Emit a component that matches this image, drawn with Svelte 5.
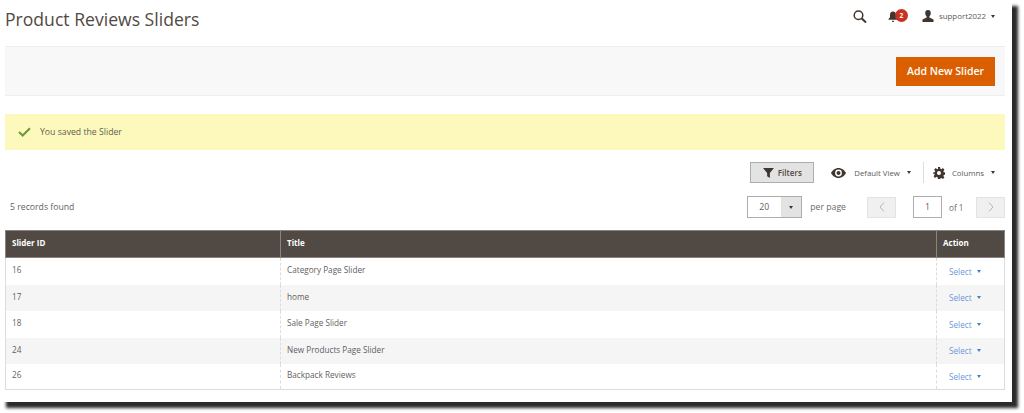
<script>
  const rows = [
    { id: 16, title: "Category Page Slider" },
    { id: 17, title: "home" },
    { id: 18, title: "Sale Page Slider" },
    { id: 24, title: "New Products Page Slider" },
    { id: 26, title: "Backpack Reviews" },
  ];
</script>

<div class="page">
  <header class="top">
    <h1>Product Reviews Sliders</h1>
    <div class="tools">
      <svg class="search" width="14" height="13" viewBox="0 0 14 13">
        <circle cx="5.5" cy="5.200" r="4.300" fill="none" stroke="#41362f" stroke-width="1.500" />
        <path d="M8.800 8.500 L13 12.500" stroke="#41362f" stroke-width="2" />
      </svg>
      <span class="bell">
        <svg width="10" height="11" viewBox="0 0 12 13">
          <path d="M6 0.500c2.400 0 3.600 1.800 3.600 4v3l1.900 2.200v.8H.5v-.8l1.900-2.200v-3C2.400 2.300 3.600.5 6 .5zM4.500 11.500h3a1.500 1.500 0 0 1-3 0z" fill="#41362f" />
        </svg>
        <b class="badge">2</b>
      </span>
      <span class="user">
        <svg width="12" height="12" viewBox="0 0 13 13">
          <path d="M6.500 0c2 0 3 1.400 3 3.300 0 1.500-.6 3-1.500 3.700v1.200l4.500 2.200V13H.5v-2.600L5 8.200V7C4.100 6.300 3.500 4.800 3.500 3.300 3.500 1.400 4.500 0 6.500 0z" fill="#41362f" />
        </svg>
        <span class="uname">support2022</span>
        <i class="caret dark"></i>
      </span>
    </div>
  </header>

  <div class="actions">
    <button class="primary">Add New Slider</button>
  </div>

  <div class="message">
    <svg width="13" height="10" viewBox="0 0 14 11">
      <path d="M1 5.500 L5 9.300 L13 1.300" fill="none" stroke="#6f9a3c" stroke-width="2.400" />
    </svg>
    <span>You saved the Slider</span>
  </div>

  <div class="controls">
    <button class="filters">
      <svg width="11" height="10" viewBox="0 0 12 11"><path d="M0 0h12L7.500 5.500V11L4.500 9V5.500z" fill="#41362f" /></svg>
      Filters
    </button>
    <span class="view">
      <svg width="15" height="10" viewBox="0 0 15 10">
        <path fill-rule="evenodd" d="M7.500 0C11 0 13.700 2.500 15 5c-1.300 2.500-4 5-7.500 5S1.300 7.500 0 5c1.300-2.500 4-5 7.500-5zm0 1.600a3.400 3.400 0 1 0 0 6.800 3.400 3.400 0 0 0 0-6.800z" fill="#41362f" />
        <circle cx="7.500" cy="5" r="2" fill="#41362f" />
      </svg>
      <span class="lbl">Default View</span>
      <i class="caret dark wide"></i>
    </span>
    <span class="columns">
      <svg width="12" height="12" viewBox="0 0 13 13">
        <path fill-rule="evenodd" d="M5.300 0h2.400l.3 1.900 1.100.5L10.700 1.200l1.700 1.700-1.200 1.600.5 1.100 1.900.3v2.400l-1.900.3-.5 1.100 1.200 1.600-1.700 1.700-1.600-1.200-1.100.5-.3 1.900H5.300L5 11.100l-1.100-.5-1.600 1.200-1.700-1.700 1.200-1.600-.5-1.100L0 7.100V5.900l1.900-.3.5-1.100L1.200 2.900l1.700-1.700 1.600 1.200 1.100-.5zM6.500 4.300a2.200 2.200 0 1 0 0 4.400 2.200 2.200 0 0 0 0-4.400z" fill="#41362f" />
      </svg>
      <span class="lbl narrow">Columns</span>
      <i class="caret dark wide"></i>
    </span>
  </div>

  <div class="pager-row">
    <span class="found">5 records found</span>
    <div class="pager">
      <span class="select"><span class="val">20</span><span class="sel-btn"><i class="caret dark"></i></span></span>
      <span class="pp">per page</span>
      <span class="nav prev">
        <svg width="6" height="10" viewBox="0 0 6 10"><path d="M5 .5 L1 5 L5 9.500" fill="none" stroke="#b5b5b5" /></svg>
      </span>
      <span class="cur">1</span>
      <span class="of">of 1</span>
      <span class="nav next">
        <svg width="6" height="10" viewBox="0 0 6 10"><path d="M1 .5 L5 5 L1 9.500" fill="none" stroke="#b5b5b5" /></svg>
      </span>
    </div>
  </div>

  <table>
    <thead>
      <tr><th class="c1">Slider ID</th><th>Title</th><th class="c3">Action</th></tr>
    </thead>
    <tbody>
      {#each rows as row, i}
        <tr class:alt={i % 2 === 1}>
          <td>{row.id}</td>
          <td>{row.title}</td>
          <td class="act"><span class="link">Select</span><i class="caret blue"></i></td>
        </tr>
      {/each}
    </tbody>
  </table>
</div>

<style>
  :global(body) {
    background: #fff;
    font-family: "Open Sans", sans-serif;
    min-height: 413px;
    overflow: hidden;
  }
  .page {
    width: 1012px;
    height: 402px;
    box-sizing: border-box;
    padding: 0 7px 0 5px;
    background: #fff;
    color: #5f5f5f;
    font-size: 8.700px;
    box-shadow: 6px 6px 3px #2b2b2b;
  }
  .top {
    height: 46px;
    display: flex;
    justify-content: space-between;
  }
  h1 {
    margin: 6px 0 0;
    font-size: 17.600px;
    font-weight: 400;
    line-height: 26px;
    color: #514943;
  }
  .tools {
    display: flex;
    align-items: flex-start;
    padding-top: 9px;
    padding-right: 10px;
  }
  .search {
    margin-right: 21px;
    margin-top: 1px;
  }
  .bell {
    position: relative;
    width: 34px;
    height: 14px;
    padding-top: 2px;
    box-sizing: border-box;
  }
  .badge {
    position: absolute;
    left: 7px;
    top: 0;
    width: 13px;
    height: 13px;
    border-radius: 50%;
    background: #c8321f;
    color: #fff;
    font-size: 6.500px;
    line-height: 13px;
    text-align: center;
  }
  .user {
    display: flex;
    align-items: center;
    height: 14px;
  }
  .uname {
    margin-left: 5px;
    color: #5a5a5a;
    font-size: 7.900px;
  }
  .caret {
    display: inline-block;
    width: 0;
    height: 0;
    border-style: solid;
    border-width: 3px 2.500px 0;
    border-color: transparent;
  }
  .caret.dark {
    border-top-color: #41362f;
    margin-left: 5px;
  }
  .caret.wide {
    margin-left: 7px;
  }
  .caret.blue {
    border-top-color: #3f7fd6;
    margin-left: 5px;
    vertical-align: 2px;
  }
  .actions {
    height: 50px;
    box-sizing: border-box;
    background: #f8f8f8;
    border-top: 1px solid #eee;
    border-bottom: 1px solid #eee;
    display: flex;
    justify-content: flex-end;
    align-items: center;
    padding-right: 10px;
  }
  .primary {
    width: 99px;
    height: 29px;
    border: 1px solid #d26000;
    background: #db5f00;
    color: #fff;
    font: 600 10.500px "Open Sans", sans-serif;
    padding: 0;
  }
  .message {
    margin-top: 18px;
    height: 36px;
    background: #fdf9bd;
    display: flex;
    align-items: center;
    padding-left: 13px;
    color: #5f5f4f;
    font-size: 8.700px;
  }
  .message span {
    margin-left: 9px;
  }
  .controls {
    margin-top: 12px;
    height: 21px;
    display: flex;
    justify-content: flex-end;
    align-items: center;
    padding-right: 10px;
  }
  .filters {
    width: 64px;
    height: 21px;
    box-sizing: border-box;
    background: #e3e3e3;
    border: 1px solid #adadad;
    color: #514943;
    font: 600 8.100px "Open Sans", sans-serif;
    display: flex;
    align-items: center;
    justify-content: center;
    gap: 4px;
    padding: 0;
  }
  .view {
    display: flex;
    align-items: center;
    margin-left: 17px;
    padding-right: 12px;
    height: 21px;
    border-right: 1px solid #ddd;
  }
  .columns {
    display: flex;
    align-items: center;
    margin-left: 9px;
  }
  .lbl {
    margin-left: 8px;
    color: #5a5a5a;
    font-size: 7.800px;
  }
  .lbl.narrow {
    margin-left: 7px;
  }
  .pager-row {
    margin-top: 12px;
    height: 24px;
    display: flex;
    justify-content: space-between;
    align-items: center;
  }
  .found {
    margin-left: 5px;
  }
  .pager {
    display: flex;
    align-items: center;
  }
  .select {
    display: flex;
    width: 55px;
    height: 22px;
    box-sizing: border-box;
    border: 1px solid #adadad;
  }
  .val {
    flex: 1;
    padding-left: 11px;
    line-height: 20px;
  }
  .sel-btn {
    width: 20px;
    background: #e3e3e3;
    display: flex;
    align-items: center;
    justify-content: center;
  }
  .sel-btn .caret {
    margin: 0;
  }
  .pp {
    margin-left: 8px;
    margin-right: 21px;
    color: #6a6a6a;
  }
  .nav {
    width: 29px;
    height: 21px;
    background: #f0f0f0;
    border: 1px solid #e3e3e3;
    box-sizing: border-box;
    display: flex;
    align-items: center;
    justify-content: center;
  }
  .cur {
    margin-left: 17px;
    width: 29px;
    height: 22px;
    box-sizing: border-box;
    border: 1px solid #adadad;
    text-align: center;
    line-height: 20px;
  }
  .of {
    margin-left: 7px;
    margin-right: 13px;
    width: 14px;
    white-space: nowrap;
    font-size: 8.200px;
    color: #6a6a6a;
  }
  table {
    margin-top: 11px;
    width: 1000px;
    border-collapse: collapse;
    table-layout: fixed;
  }
  th {
    height: 27px;
    padding: 0 0 3px 6px;
    box-sizing: border-box;
    background: #514943;
    color: #fff;
    font-size: 8px;
    font-weight: 700;
    text-align: left;
    border: 1px solid #8a837e;
  }
  .c1 {
    width: 275px;
  }
  .c3 {
    width: 68px;
  }
  td {
    height: 26px;
    padding: 0 0 3px 6px;
    border-left: 1px dashed #dcdcdc;
    border-right: 1px dashed #dcdcdc;
    color: #5f5f5f;
    font-size: 8.200px;
    box-sizing: border-box;
  }
  tr:nth-child(1) td,
  tr:nth-child(3) td {
    height: 27px;
  }
  td:first-child {
    border-left: 1px solid #dcdcdc;
  }
  td:last-child {
    border-right: 1px solid #dcdcdc;
  }
  tbody tr:last-child td {
    border-bottom: 1px solid #dcdcdc;
  }
  tr.alt td {
    background: #f5f5f5;
  }
  td.act {
    padding: 0 0 0 12px;
  }
  .link {
    color: #6d97dc;
  }
</style>
